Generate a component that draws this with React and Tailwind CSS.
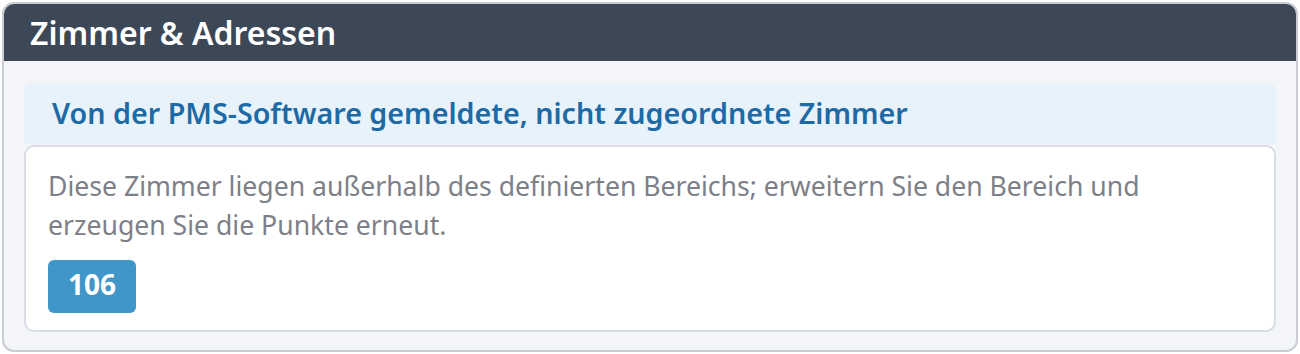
import React from 'react';

const rooms = ['106'];

const App = () => {
  return (
    <div className="w-[1300px] h-[354px] bg-white p-[2px] font-['Noto_Sans',sans-serif]">
      <div className="h-[350px] rounded-[12px] border-2 border-[#c7ccd5] bg-[#f3f5f8] overflow-hidden flex flex-col">
        <div className="h-[57px] bg-[#3d4856] flex items-center pl-[26px]">
          <h2 className="text-[32px] font-semibold text-white leading-none">Zimmer &amp; Adressen</h2>
        </div>
        <div className="flex flex-col px-[20px] pt-[22px]">
          <div className="h-[61px] rounded-t-[8px] bg-[#e8f2fb] flex items-center pl-[28px]">
            <h3 className="text-[28.7px] font-semibold text-[#1d6aa5] leading-none">
              Von der PMS-Software gemeldete, nicht zugeordnete Zimmer
            </h3>
          </div>
          <div className="mt-[1px] h-[187px] rounded-[10px] border-2 border-[#d8dde3] bg-white px-[22px] pt-[20px]">
            <p className="text-[26.6px] leading-[39px] text-[#7d8087]">
              Diese Zimmer liegen außerhalb des definierten Bereichs; erweitern Sie den Bereich und
              <br />
              erzeugen Sie die Punkte erneut.
            </p>
            <div className="mt-[15px] flex gap-2">
              {rooms.map((r) => (
                <span
                  key={r}
                  className="w-[88px] h-[53px] pb-[6px] rounded-[6px] bg-[#4096c8] text-white text-[28px] font-bold flex items-center justify-center"
                >
                  {r}
                </span>
              ))}
            </div>
          </div>
        </div>
      </div>
    </div>
  );
};

export default App;
